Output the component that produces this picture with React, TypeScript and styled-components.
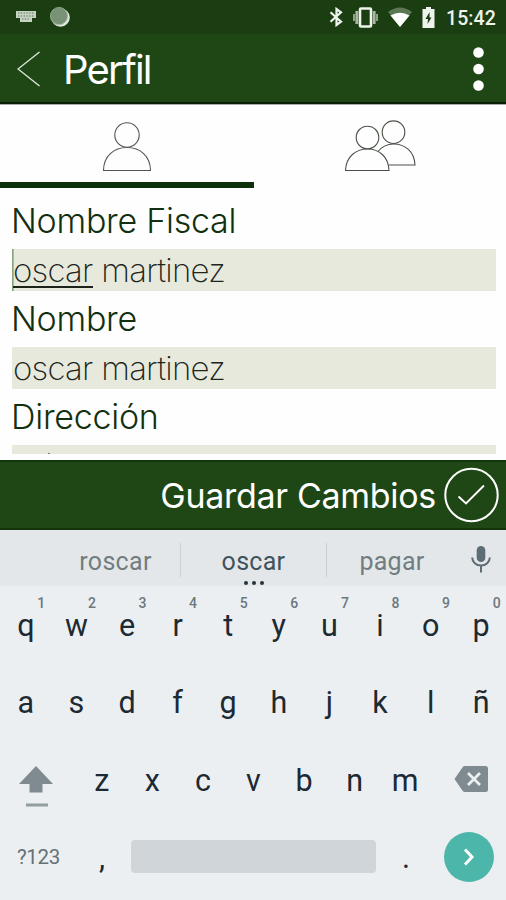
import React from "react";
import styled, { createGlobalStyle } from "styled-components";

const Global = createGlobalStyle`
  *, *::before, *::after { box-sizing: border-box; }
  body { margin: 0; background: #fff; }
`;

const Screen = styled.div`
  width: 506px;
  height: 900px;
  display: flex;
  flex-direction: column;
  overflow: hidden;
  background: #fefefe;
  font-family: Inter, "Liberation Sans", sans-serif;
`;

const StatusBar = styled.div`
  height: 34px;
  flex: none;
  display: flex;
  align-items: center;
  justify-content: space-between;
  background: #1a3e12;
  padding: 0 11px 0 16px;
`;

const StatusGroup = styled.div<{ $gap: number }>`
  display: flex;
  align-items: center;
  gap: ${(p) => p.$gap}px;
  svg { display: block; }
`;

const Clock = styled.span`
  font: 500 19.5px/24px Roboto, sans-serif;
  color: #eef3ec;
  letter-spacing: 0.1px;
  width: 49px;
  margin-left: 1px;
  padding-top: 4px;
  white-space: nowrap;
`;

const AppBar = styled.header`
  height: 70px;
  flex: none;
  display: flex;
  align-items: center;
  padding: 2px 22px 0 17px;
  background: #1f4716;
  border-bottom: 2px solid #0b1f06;
`;

const Title = styled.h1`
  margin: 0 auto 0 22px;
  padding-top: 1px;
  font-size: 40px;
  line-height: 48px;
  font-weight: 400;
  letter-spacing: -1.8px;
  color: #fff;
`;

const Tabs = styled.nav`
  height: 84px;
  flex: none;
  display: grid;
  grid-template-columns: 254px 252px;
  border-top: 1px solid #aaa;
`;

const Tab = styled.div<{ $active?: boolean }>`
  display: flex;
  justify-content: center;
  padding-top: 13px;
  border-bottom: 6px solid ${(p) => (p.$active ? "#0d310a" : "transparent")};
`;

const Form = styled.main`
  height: 272px;
  flex: none;
  padding: 12px 10px 0 12px;
`;

const Label = styled.div`
  height: 49px;
  line-height: 42px;
  font-size: 34px;
  font-weight: 350;
  color: #12300f;
  letter-spacing: -0.25px;
  white-space: nowrap;
  text-indent: -1px;
`;

const Field = styled.div`
  height: 42px;
  margin-bottom: 7px;
  padding-left: 1px;
  line-height: 42px;
  font-size: 33px;
  font-weight: 200;
  letter-spacing: -0.75px;
  color: #20251c;
  background: #e7e9dc;
  white-space: nowrap;
`;

const FocusedField = styled(Field)`
  padding-left: 0;
  border-left: 1px solid #87a580;
  box-shadow: inset 1px 0 #a8bca1;
`;

const Composing = styled.span`
  display: inline-block;
  height: 39px;
  line-height: 42px;
  vertical-align: top;
  border-bottom: 2px solid #1d2319;
`;

const ClippedField = styled.div`
  height: 9px;
  background: #e7e9dc;
  padding: 8px 0 0 36px;
  &::before {
    content: "";
    display: block;
    width: 2px;
    height: 1px;
    background: #777d70;
  }
`;

const SaveBar = styled.div`
  height: 70px;
  flex: none;
  display: flex;
  align-items: center;
  justify-content: flex-end;
  gap: 8px;
  padding-right: 7px;
  background: #1f4716;
  border-top: 2px solid #12350c;
  border-bottom: 2px solid #12350c;
  color: #fff;
  font-size: 34px;
  letter-spacing: -0.3px;
`;

const Keyboard = styled.section`
  flex: 1;
  background: #eceff1;
  font-family: Roboto, sans-serif;
  color: #1c2a33;
`;

const Suggestions = styled.div`
  height: 56px;
  display: grid;
  grid-template-columns: 181px 146px 130px 49px;
  align-items: center;
  padding-top: 3px;
  background: #e4e7e9;
`;

const Suggestion = styled.div<{ $main?: boolean; $divided?: boolean; $indent?: number }>`
  position: relative;
  height: 34px;
  line-height: 37px;
  padding-left: ${(p) => p.$indent ?? 0}px;
  text-align: center;
  font-size: 25px;
  letter-spacing: 0.3px;
  color: ${(p) => (p.$main ? "#40535c" : "#727d82")};
  border-right: ${(p) => (p.$divided ? "1px solid #cbd0d2" : "none")};
`;

const MoreDots = styled.span`
  position: absolute;
  left: 50%;
  bottom: -8px;
  display: flex;
  gap: 4px;
  transform: translateX(-50%);
  i { width: 4px; height: 4px; border-radius: 50%; background: #26343b; }
`;

const KeyRow = styled.div<{ $columns: string }>`
  height: 77.3px;
  display: grid;
  grid-template-columns: ${(p) => p.$columns};
  align-items: center;
  justify-items: center;
`;

const Key = styled.div`
  position: relative;
  width: 100%;
  padding: 3px 0 0 1px;
  text-align: center;
  font-size: 30.5px;
  line-height: 36px;
`;

const Hint = styled.sup`
  position: absolute;
  top: -10px;
  left: calc(50% + 6px);
  width: 20px;
  text-align: center;
  font-size: 14px;
  font-weight: 500;
  line-height: 16px;
  color: #6d787d;
`;

const SymbolKey = styled.div`
  font-size: 20.5px;
  line-height: 26px;
  letter-spacing: -0.3px;
  color: #647177;
  padding-left: 1px;
`;

const SpaceBar = styled.div`
  width: 245px;
  height: 33px;
  border-radius: 4px;
  background: #cfd5d8;
`;

const EnterKey = styled.div`
  width: 50px;
  height: 50px;
  border-radius: 50%;
  background: #4db6aa;
  display: grid;
  place-items: center;
`;

const MicSlot = styled.div`
  padding: 0 0 1px 14px;
  svg { display: block; }
`;

const ShiftSlot = styled.div`
  padding: 15px 5px 0 0;
  svg { display: block; }
`;

const BackspaceSlot = styled.div`
  padding-left: 6px;
  svg { display: block; }
`;

const KeyboardIcon = () => (
  <svg width="20" height="12" viewBox="0 0 20 12" fill="#c6d2c2">
    <path d="M0 0h20v7H16v4H4V7H0z" />
    <path d="M2 2h16M2 5h16M6 8h8" stroke="#5b7455" strokeWidth="1" strokeDasharray="1.4 1.4" />
  </svg>
);

const SyncIcon = () => (
  <svg width="20" height="20" viewBox="0 0 20 20">
    <circle cx="10.5" cy="10.5" r="9.3" fill="#e0e8dd" />
    <circle cx="9" cy="9" r="8.6" fill="#799276" stroke="#a0b29c" strokeWidth=".8" />
  </svg>
);

const BluetoothIcon = () => (
  <svg width="15" height="20" viewBox="0 0 15 20" fill="none" stroke="#eef3ec" strokeWidth="2.2">
    <path d="M2.500 5.200 13 14.600 8.500 18V2L13 5.400 2.500 14.800" />
  </svg>
);

const VibrateIcon = () => (
  <svg width="25" height="21" viewBox="0 0 25 21" fill="none">
    <path d="M1 7v7M24 7v7" stroke="#8da188" strokeWidth="2" />
    <path d="M3.800 4v13M21.200 4v13" stroke="#a9b8a4" strokeWidth="2.800" />
    <rect x="7" y="1.500" width="11" height="18" rx="1" stroke="#eef3ec" strokeWidth="2.600" />
  </svg>
);

const WifiIcon = () => (
  <svg width="24" height="20" viewBox="0 0 24 20">
    <path d="M0 5Q12-4 24 5L12 20Z" fill="#5b7754" />
    <path d="M2.500 8.500Q12 3 21.500 8.500L12 20Z" fill="#fff" />
  </svg>
);

const BatteryIcon = () => (
  <svg width="13" height="21" viewBox="0 0 13 21">
    <path d="M4 0h5v2h3.500v19H.5V2H4z" fill="#eef3ec" />
    <path d="M7.600 5 3.500 12h2.500l-.5 5 4-6.500H7.500z" fill="#1a3e12" />
  </svg>
);

const BackIcon = () => (
  <svg width="24" height="36" viewBox="0 0 24 36" fill="none" stroke="#dce5d9" strokeWidth="1.400">
    <path d="M22.500 1 1 18l21.500 17" />
  </svg>
);

const MenuIcon = () => (
  <svg width="12" height="46" viewBox="0 0 12 46" fill="#fff">
    <circle cx="6.500" cy="6.500" r="5.300" />
    <circle cx="6.500" cy="23" r="5.300" />
    <circle cx="6.500" cy="39.500" r="5.300" />
  </svg>
);

const PersonIcon = () => (
  <svg width="50" height="54" viewBox="0 0 50 54" fill="none" stroke="#555" strokeWidth="1.100">
    <circle cx="25" cy="17" r="12.200" />
    <path d="M1.500 52.500C1.500 38 12 29.500 25 29.500S48.500 38 48.500 52.500Z" />
  </svg>
);

const PeopleIcon = () => (
  <svg width="72" height="54" viewBox="0 0 72 54" fill="none" stroke="#4a5148" strokeWidth="1.100">
    <circle cx="23.500" cy="19.500" r="11.300" />
    <path d="M1.500 52.500C2 38.500 12 31 23.500 31S44.500 38.500 45 52.500Z" />
    <circle cx="49.500" cy="14.200" r="11.300" />
    <path d="M34 33.500C38.500 28 43 26 49.500 26 61 26 70.500 33.500 71 47H45" />
  </svg>
);

const ConfirmIcon = () => (
  <svg width="55" height="56" viewBox="0 0 55 56" fill="none" stroke="#fff">
    <circle cx="27.500" cy="28" r="26.200" strokeWidth="2" />
    <path d="M14.500 29.500 22 36.500 40 18.500" strokeWidth="1.900" />
  </svg>
);

const MicIcon = () => (
  <svg width="20" height="28" viewBox="0 0 20 28" fill="none" stroke="#5d6d75">
    <rect x="5.700" y="1" width="8.600" height="16" rx="4.300" fill="#5d6d75" stroke="none" />
    <path d="M1.200 12.500a8.800 8 0 0 0 17.600 0M10 21v6.500" strokeWidth="2" />
  </svg>
);

const ShiftIcon = () => (
  <svg width="34" height="42" viewBox="0 0 34 42" fill="#7f8b90">
    <path d="M17 0 34 18H23.500v8.500h-13V18H0z" />
    <path d="M7 37.500h22v3H7z" fill="#929da1" />
  </svg>
);

const BackspaceIcon = () => (
  <svg width="34" height="26" viewBox="0 0 34 26">
    <path d="M11 0h20.500Q34 0 34 2.500v21Q34 26 31.500 26H11Q9.500 26 8.600 24.700L.5 13 8.600 1.300Q9.500 0 11 0Z" fill="#7f8b90" />
    <path d="m14 7 12 12M26 7 14 19" stroke="#eceff1" strokeWidth="2.800" />
  </svg>
);

const ArrowIcon = () => (
  <svg width="14" height="18" viewBox="0 0 14 18" fill="none" stroke="#fff" strokeWidth="3">
    <path d="m3 1.500 7 7.500-7 7.500" />
  </svg>
);

const TOP_KEYS = [..."qwertyuiop"];
const HOME_KEYS = [..."asdfghjklñ"];
const LOW_KEYS = [..."zxcvbnm"];

export default function App() {
  return (
    <>
      <Global />
      <Screen>
        <StatusBar>
          <StatusGroup $gap={14}>
            <KeyboardIcon />
            <SyncIcon />
          </StatusGroup>
          <StatusGroup $gap={10}>
            <BluetoothIcon />
            <VibrateIcon />
            <WifiIcon />
            <BatteryIcon />
            <Clock>15:42</Clock>
          </StatusGroup>
        </StatusBar>
        <AppBar>
          <BackIcon />
          <Title>Perfil</Title>
          <MenuIcon />
        </AppBar>
        <Tabs>
          <Tab $active><PersonIcon /></Tab>
          <Tab><PeopleIcon /></Tab>
        </Tabs>
        <Form>
          <Label>Nombre Fiscal</Label>
          <FocusedField><Composing>oscar</Composing> martinez</FocusedField>
          <Label>Nombre</Label>
          <Field>oscar martinez</Field>
          <Label>Dirección</Label>
          <ClippedField />
        </Form>
        <SaveBar>
          <span>Guardar Cambios</span>
          <ConfirmIcon />
        </SaveBar>
        <Keyboard>
          <Suggestions>
            <Suggestion $divided $indent={51}>roscar</Suggestion>
            <Suggestion $main $divided>oscar<MoreDots><i /><i /><i /></MoreDots></Suggestion>
            <Suggestion>pagar</Suggestion>
            <MicSlot><MicIcon /></MicSlot>
          </Suggestions>
          <KeyRow $columns="repeat(10, 1fr)">
            {TOP_KEYS.map((k, i) => (
              <Key key={k}>{k}<Hint>{(i + 1) % 10}</Hint></Key>
            ))}
          </KeyRow>
          <KeyRow $columns="repeat(10, 1fr)">
            {HOME_KEYS.map((k) => <Key key={k}>{k}</Key>)}
          </KeyRow>
          <KeyRow $columns="76px repeat(7, 1fr) 76px">
            <ShiftSlot><ShiftIcon /></ShiftSlot>
            {LOW_KEYS.map((k) => <Key key={k}>{k}</Key>)}
            <BackspaceSlot><BackspaceIcon /></BackspaceSlot>
          </KeyRow>
          <KeyRow $columns="76px 51px 253px 51px 75px">
            <SymbolKey>?123</SymbolKey>
            <Key>,</Key>
            <SpaceBar />
            <Key>.</Key>
            <EnterKey><ArrowIcon /></EnterKey>
          </KeyRow>
        </Keyboard>
      </Screen>
    </>
  );
}
